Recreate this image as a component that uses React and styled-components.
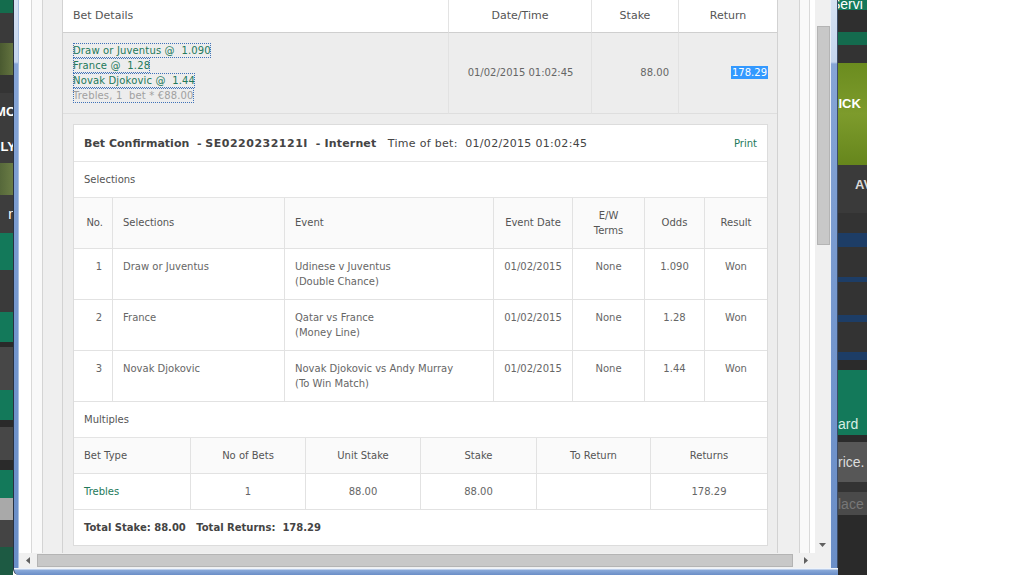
import React from 'react';
import styled, { createGlobalStyle } from 'styled-components';

const GREEN = '#23795a';

// background site that peeks out on both sides of the window
const leftSite = [
  { h: 13, bg: '#146c4d' },
  { h: 30, bg: '#3a3a3a' },
  { h: 32, bg: 'linear-gradient(90deg, #4a5a30, #63733f)' },
  { h: 18, bg: '#343434' },
  { h: 37, bg: '#3c3c3c', text: 'MO' },
  { h: 33, bg: '#3c3c3c', text: 'LY' },
  { h: 32, bg: 'linear-gradient(90deg, #56683a, #6a7c45)' },
  { h: 38, bg: '#3d3d3d', text: 'n', light: true },
  { h: 37, bg: '#13795a' },
  { h: 42, bg: '#3a3a3a' },
  { h: 30, bg: '#13795a' },
  { h: 5, bg: '#2a2a2a' },
  { h: 43, bg: '#474747' },
  { h: 30, bg: '#13795a' },
  { h: 7, bg: '#2a2a2a' },
  { h: 33, bg: '#474747' },
  { h: 10, bg: '#2a2a2a' },
  { h: 28, bg: '#13795a' },
  { h: 22, bg: '#a9a9a9' },
  { h: 27, bg: '#444' },
  { h: 28, bg: '#1d5a43' },
];

const rightSite = [
  { h: 10, bg: '#14795a', text: 'Servi', shift: -7, end: true, light: true },
  { h: 22, bg: '#2f2f2f' },
  { h: 13, bg: '#146b4e' },
  { h: 18, bg: '#333' },
  { h: 102, bg: 'linear-gradient(180deg, #6b8c1f, #7d9b2c 50%, #66861c)', text: 'KICK', shift: -9, top: 35 },
  { h: 48, bg: '#3a3a3a', text: 'AV', shift: 17, fg: '#d8d8d8', top: 14 },
  { h: 20, bg: '#333' },
  { h: 14, bg: '#1d3d66' },
  { h: 30, bg: '#333' },
  { h: 5, bg: '#1d3d66' },
  { h: 33, bg: '#333' },
  { h: 7, bg: '#1d3d66' },
  { h: 30, bg: '#333' },
  { h: 8, bg: '#1d3d66' },
  { h: 10, bg: '#2b2b2b' },
  { h: 42, bg: '#13795a' },
  { h: 23, bg: '#13795a', text: 'ard', light: true, fg: '#d6eee4' },
  { h: 7, bg: '#2b2b2b' },
  { h: 40, bg: '#575757', text: 'rice.', light: true, fg: '#dddddd' },
  { h: 10, bg: '#333' },
  { h: 23, bg: '#4a4a4a', text: 'lace', light: true, fg: '#777' },
  { h: 60, bg: '#2a2a2a' },
];

const betLines = ['Draw or Juventus @  1.090', 'France @  1.28', 'Novak Djokovic @  1.44'];

const selections = [
  { no: 1, sel: 'Draw or Juventus', event: ['Udinese v Juventus', '(Double Chance)'], odds: '1.090' },
  { no: 2, sel: 'France', event: ['Qatar vs France', '(Money Line)'], odds: '1.28' },
  { no: 3, sel: 'Novak Djokovic', event: ['Novak Djokovic vs Andy Murray', '(To Win Match)'], odds: '1.44' },
];

const selHeads = [
  { label: 'No.', align: 'right' },
  { label: 'Selections', align: 'left' },
  { label: 'Event', align: 'left' },
  { label: 'Event Date', align: 'center' },
  { label: 'E/W\nTerms', align: 'center' },
  { label: 'Odds', align: 'center' },
  { label: 'Result', align: 'center' },
];

const multHeads = ['Bet Type', 'No of Bets', 'Unit Stake', 'Stake', 'To Return', 'Returns'];

const GlobalStyle = createGlobalStyle`
  html, body { margin: 0; padding: 0; background: #fff; overflow: hidden; }
  body { font-family: "DejaVu Sans", Verdana, sans-serif; color: #555; }
  * { box-sizing: border-box; }
`;

const Page = styled.div`
  display: flex;
  height: 575px;
  overflow: hidden;
`;

const SiteStrip = styled.div`
  width: ${p => p.$w}px;
  flex: none;
  display: flex;
  flex-direction: column;
  overflow: hidden;
`;

const SiteBlock = styled.div`
  height: ${p => p.$h}px;
  flex: none;
  background: ${p => p.$bg};
  display: flex;
  align-items: ${p => (p.$end ? 'flex-end' : p.$top ? 'flex-start' : 'center')};
  justify-content: ${p => (p.$right ? 'flex-end' : 'flex-start')};
  padding-top: ${p => p.$top || 0}px;
  overflow: hidden;
  white-space: nowrap;
  font-family: "Liberation Sans", Arial, sans-serif;
  font-size: ${p => (p.$light ? 14 : 13)}px;
  font-weight: ${p => (p.$light ? 400 : 700)};
  line-height: 12px;
  color: ${p => p.$fg || '#fff'};
`;

const SiteText = styled.span`
  flex: none;
  margin-left: ${p => p.$shift || 0}px;
  margin-right: ${p => (p.$right ? -3 : 0)}px;
`;

const Blank = styled.div`
  flex: 1;
  background: #fff;
`;

const Window = styled.div`
  width: 825px;
  flex: none;
  display: flex;
  flex-direction: column;
`;

const WindowBody = styled.div`
  flex: 1;
  display: flex;
  min-height: 0;
`;

const FrameSide = styled.div`
  width: ${p => p.$w}px;
  flex: none;
  background: linear-gradient(180deg, #d6e2f3 0, #c4d5ed 62px, #86a5d6 64px, #7396cd 60%, #6a8ec7 100%);
  border-left: 1px solid ${p => (p.$side === 'left' ? '#27303f' : '#eaf0f8')};
  border-right: 1px solid ${p => (p.$side === 'left' ? '#a9c0e2' : '#3c4c66')};
`;

const FrameBottom = styled.div`
  height: 7px;
  flex: none;
  background: linear-gradient(180deg, #eef3fa 0, #eef3fa 1px, #8aa9d9 2px, #6a8ec7 100%);
  border-left: 1px solid #27303f;
  border-radius: 0 0 0 6px;
`;

const Client = styled.div`
  flex: 1;
  min-width: 0;
  display: flex;
  flex-direction: column;
`;

const ClientMain = styled.div`
  flex: 1;
  min-height: 0;
  display: flex;
`;

const Viewport = styled.div`
  flex: 1;
  min-width: 0;
  background: #fff;
  padding: 0 5px 0 12px;
  overflow: hidden;
  display: flex;
`;

const OuterBox = styled.div`
  flex: 1;
  display: flex;
  background: #f9f9f9;
  border-left: 1px solid #d9d9d9;
  border-right: 1px solid #d9d9d9;
  padding: 0 9px 0 10px;
`;

const InnerBox = styled.div`
  flex: 1;
  background: #efefef;
  border-left: 1px solid #d4d4d4;
  border-right: 1px solid #d4d4d4;
  padding: 0 21px 0 19px;
`;

const BetTable = styled.div`
  display: grid;
  grid-template-columns: 385px 143px 87px 99px;
  border-left: 1px solid #d2d2d2;
  border-right: 1px solid #d2d2d2;
  background: #ededed;
`;

const TopHead = styled.div`
  height: 33px;
  background: #fff;
  border-bottom: 1px solid #cfcfcf;
  border-left: ${p => (p.$divider ? '1px solid #e3e3e3' : 'none')};
  display: flex;
  align-items: center;
  justify-content: ${p => (p.$align === 'left' ? 'flex-start' : 'center')};
  padding: 0 10px 1px;
  font-size: 11px;
  color: #555;
`;

const TopCell = styled.div`
  height: 81px;
  border-bottom: 1px solid #dedede;
  border-left: ${p => (p.$divider ? '1px solid #e2e2e2' : 'none')};
  display: flex;
  flex-direction: ${p => (p.$align === 'left' ? 'column' : 'row')};
  align-items: ${p => (p.$align === 'left' ? 'flex-start' : 'center')};
  justify-content: ${p => ({ left: 'flex-start', center: 'center', right: 'flex-end' }[p.$align])};
  padding: ${p => (p.$align === 'left' ? '10px' : '0 9px 1px 10px')};
  font-size: 10px;
  line-height: 15px;
  color: #666;
`;

const BetLine = styled.span`
  display: table;
  height: 15px;
  white-space: pre;
  letter-spacing: 0.15px;
  color: ${p => (p.$muted ? '#a0a0a0' : GREEN)};
  outline: 1px dotted #3f72b8;
  outline-offset: -1px;
`;

const Selected = styled.span`
  background: #3399ff;
  color: #fff;
  line-height: 13px;
  padding: 0 1px;
`;

const DetailRow = styled.div`
  grid-column: 1 / -1;
  padding: 10px 9px 10px 10px;
`;

const Panel = styled.div`
  background: #fff;
  border: 1px solid #dcdcdc;
`;

const PanelHeader = styled.div`
  height: 37px;
  border-bottom: 1px solid #e4e4e4;
  display: flex;
  align-items: center;
  padding: 0 10px 0 10px;
  font-size: 11px;
  color: #444;
  white-space: pre;
`;

const Strong = styled.span`
  font-weight: 700;
  color: #444;
  letter-spacing: ${p => p.$spread || 0}px;
`;

const TimeOfBet = styled.span`
  letter-spacing: 0.3px;
`;

const PrintLink = styled.span`
  margin-left: auto;
  font-size: 10px;
  color: ${GREEN};
`;

const SectionLabel = styled.div`
  height: 36px;
  border-bottom: 1px solid #e4e4e4;
  display: flex;
  align-items: center;
  padding: 0 10px;
  font-size: 10px;
  color: #555;
`;

const Grid = styled.div`
  display: grid;
  grid-template-columns: ${p => p.$cols};
`;

const HeadCell = styled.div`
  height: ${p => p.$h}px;
  background: #fafafa;
  border-bottom: 1px solid #e2e2e2;
  border-left: ${p => (p.$divider ? '1px solid #e2e2e2' : 'none')};
  display: flex;
  align-items: center;
  justify-content: ${p => ({ left: 'flex-start', center: 'center', right: 'flex-end' }[p.$align])};
  text-align: ${p => p.$align};
  padding: 0 ${p => (p.$align === 'right' ? 9 : 10)}px 1px 10px;
  font-size: 10px;
  line-height: 15px;
  color: #555;
  white-space: pre;
`;

const BodyCell = styled.div`
  height: ${p => p.$h}px;
  border-bottom: 1px solid #e2e2e2;
  border-left: ${p => (p.$divider ? '1px solid #e2e2e2' : 'none')};
  padding: ${p => (p.$middle ? '0' : '10px')} 10px 0 10px;
  display: ${p => (p.$middle ? 'flex' : 'block')};
  align-items: center;
  justify-content: ${p => ({ left: 'flex-start', center: 'center', right: 'flex-end' }[p.$align])};
  text-align: ${p => p.$align};
  font-size: 10px;
  line-height: 15px;
  color: ${p => (p.$green ? GREEN : '#666')};
`;

const TotalRow = styled.div`
  height: 35px;
  display: flex;
  align-items: center;
  padding: 0 10px;
  font-size: 10px;
  font-weight: 700;
  color: #444;
  white-space: pre;
`;

const VScroll = styled.div`
  width: 15px;
  flex: none;
  background: #f0f0f0;
  display: flex;
  flex-direction: column;
  align-items: flex-end;
`;

const VThumb = styled.div`
  width: 13px;
  height: 219px;
  margin-top: 26px;
  background: #c8c8c8;
  border: 1px solid #b4b4b4;
`;

const Spacer = styled.div`
  flex: 1;
`;

const ArrowBox = styled.div`
  width: ${p => p.$w}px;
  height: ${p => p.$h}px;
  flex: none;
  display: flex;
  align-items: center;
  justify-content: center;
`;

const HScrollRow = styled.div`
  height: 15px;
  flex: none;
  display: flex;
`;

const HScroll = styled.div`
  flex: 1;
  background: #f0f0f0;
  display: flex;
  align-items: center;
`;

const HThumb = styled.div`
  width: 756px;
  height: 13px;
  background: #c8c8c8;
  border: 1px solid #b4b4b4;
`;

const Corner = styled.div`
  width: 15px;
  flex: none;
  background: #f0f0f0;
`;

const Arrow = ({ dir }) => {
  const pts = {
    down: '0,0 7,0 3.5,4',
    left: '4,0 4,7 0,3.5',
    right: '0,0 0,7 4,3.5',
  }[dir];
  const vertical = dir === 'down';
  return (
    <svg width={vertical ? 7 : 4} height={vertical ? 4 : 7} viewBox={vertical ? '0 0 7 4' : '0 0 4 7'}>
      <polygon points={pts} fill="#606060" />
    </svg>
  );
};

const Site = ({ blocks, width, right }) => (
  <SiteStrip $w={width}>
    {blocks.map((b, i) => (
      <SiteBlock key={i} $h={b.h} $bg={b.bg} $fg={b.fg} $light={b.light} $end={b.end} $top={b.top} $right={right}>
        {b.text && <SiteText $shift={b.shift} $right={right}>{b.text}</SiteText>}
      </SiteBlock>
    ))}
  </SiteStrip>
);

const BetDetails = () => (
  <BetTable>
    <TopHead $align="left">Bet Details</TopHead>
    <TopHead $divider>Date/Time</TopHead>
    <TopHead $divider>Stake</TopHead>
    <TopHead $divider>Return</TopHead>

    <TopCell $align="left">
      {betLines.map(l => (
        <BetLine key={l}>{l}</BetLine>
      ))}
      <BetLine $muted>{'Trebles, 1  bet * €88.00'}</BetLine>
    </TopCell>
    <TopCell $divider $align="center">01/02/2015 01:02:45</TopCell>
    <TopCell $divider $align="right">88.00</TopCell>
    <TopCell $divider $align="right"><Selected>178.29</Selected></TopCell>

    <DetailRow>
      <Panel>
        <PanelHeader>
          <Strong>{'Bet Confirmation  - '}</Strong>
          <Strong $spread={0.5}>SE0220232121I</Strong>
          <Strong $spread={0.15}>{'  - Internet'}</Strong>
          <TimeOfBet>{'   Time of bet:  01/02/2015 01:02:45'}</TimeOfBet>
          <PrintLink>Print</PrintLink>
        </PanelHeader>

        <SectionLabel>Selections</SectionLabel>
        <Grid $cols="38px 172px 209px 79px 72px 60px 63px">
          {selHeads.map((h, i) => (
            <HeadCell key={h.label} $h={51} $align={h.align} $divider={i > 0}>{h.label}</HeadCell>
          ))}
          {selections.map(s => (
            <React.Fragment key={s.no}>
              <BodyCell $h={51} $align="right">{s.no}</BodyCell>
              <BodyCell $h={51} $align="left" $divider>{s.sel}</BodyCell>
              <BodyCell $h={51} $align="left" $divider>{s.event[0]}<br />{s.event[1]}</BodyCell>
              <BodyCell $h={51} $align="center" $divider>01/02/2015</BodyCell>
              <BodyCell $h={51} $align="center" $divider>None</BodyCell>
              <BodyCell $h={51} $align="center" $divider>{s.odds}</BodyCell>
              <BodyCell $h={51} $align="center" $divider>Won</BodyCell>
            </React.Fragment>
          ))}
        </Grid>

        <SectionLabel>Multiples</SectionLabel>
        <Grid $cols="116px 115px 115px 116px 114px 117px">
          {multHeads.map((h, i) => (
            <HeadCell key={h} $h={36} $align={i === 0 ? 'left' : 'center'} $divider={i > 0}>{h}</HeadCell>
          ))}
          <BodyCell $h={36} $middle $align="left" $green>Trebles</BodyCell>
          <BodyCell $h={36} $middle $align="center" $divider>1</BodyCell>
          <BodyCell $h={36} $middle $align="center" $divider>88.00</BodyCell>
          <BodyCell $h={36} $middle $align="center" $divider>88.00</BodyCell>
          <BodyCell $h={36} $middle $align="center" $divider />
          <BodyCell $h={36} $middle $align="center" $divider>178.29</BodyCell>
        </Grid>
        <TotalRow>{'Total Stake: 88.00   Total Returns:  178.29'}</TotalRow>
      </Panel>
    </DetailRow>
  </BetTable>
);

export default function App() {
  return (
    <>
      <GlobalStyle />
      <Page>
        <Site blocks={leftSite} width={13} right />
        <Window>
          <WindowBody>
            <FrameSide $w={6} $side="left" />
            <Client>
              <ClientMain>
                <Viewport>
                  <OuterBox>
                    <InnerBox>
                      <BetDetails />
                    </InnerBox>
                  </OuterBox>
                </Viewport>
                <VScroll>
                  <VThumb />
                  <Spacer />
                  <ArrowBox $w={15} $h={17}><Arrow dir="down" /></ArrowBox>
                </VScroll>
              </ClientMain>
              <HScrollRow>
                <HScroll>
                  <ArrowBox $w={18} $h={15}><Arrow dir="left" /></ArrowBox>
                  <HThumb />
                  <Spacer />
                  <ArrowBox $w={18} $h={15}><Arrow dir="right" /></ArrowBox>
                </HScroll>
                <Corner />
              </HScrollRow>
            </Client>
            <FrameSide $w={8} $side="right" />
          </WindowBody>
          <FrameBottom />
        </Window>
        <Site blocks={rightSite} width={29} />
        <Blank />
      </Page>
    </>
  );
}
